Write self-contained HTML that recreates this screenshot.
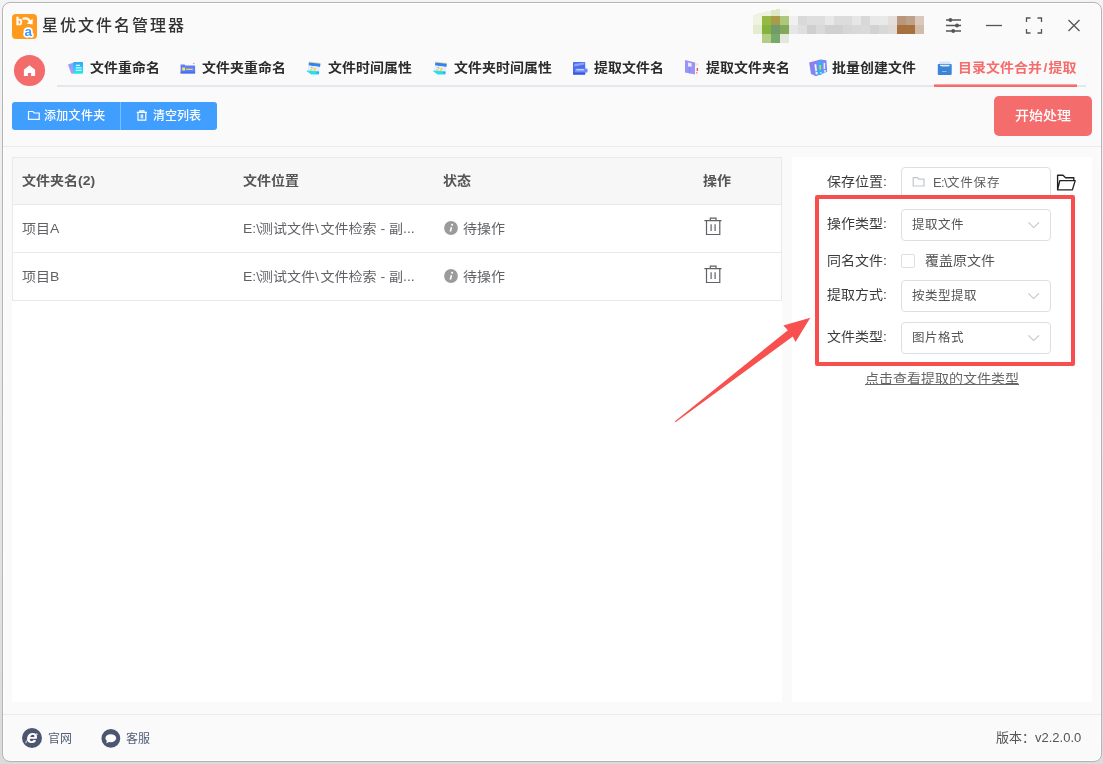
<!DOCTYPE html>
<html lang="zh-CN">
<head>
<meta charset="utf-8">
<title>星优文件名管理器</title>
<style>
*{box-sizing:border-box;margin:0;padding:0}
html,body{width:1103px;height:764px;overflow:hidden;background:#e6e6e6}
body{background:linear-gradient(#f3f3f3,#dbdbdb)}
body{font-family:"Liberation Sans","Noto Sans CJK SC",sans-serif;color:#333;position:relative}
#root{position:absolute;left:0;top:0;width:1103px;height:764px;will-change:transform}
.abs{position:absolute}
.win{position:absolute;left:2px;top:2px;width:1100px;height:760px;border:1px solid #b4b4b4;border-radius:8px;background:#fafafa;box-shadow:inset 0 0 0 1px #fff}
.t{position:absolute;white-space:nowrap;line-height:20px;height:20px}
.title{left:42px;top:16px;font-size:16px;letter-spacing:2px;color:#333;font-weight:500}
.tab{font-size:13px;letter-spacing:.1px;transform:scaleX(1.07);transform-origin:0 0;font-weight:700;color:#2b2b2b;top:58px}
.tab.on{color:#f56c6c}
.tabline{left:57px;top:85px;width:1029px;height:2px;background:#e4e7ed}
.tabon{left:934px;top:84px;width:143px;height:3px;background:#f56c6c}
.btn{position:absolute;color:#fff;font-size:12px;white-space:nowrap}
.hline{position:absolute;height:1px;background:#ebebeb}
.panel{position:absolute;background:#fff}
.th{font-size:13px;transform:scaleX(1.077);transform-origin:0 0;font-weight:700;color:#555;top:171px}
.td{font-size:13px;transform:scaleX(1.077);transform-origin:0 0;color:#606266}
.lab{font-size:13px;transform:scaleX(1.077);transform-origin:0 0;color:#3a3a3a}
.inp{position:absolute;left:901px;width:150px;border:1px solid #dcdfe6;border-radius:4px;background:#fff}
.sel{font-size:12.5px;letter-spacing:.5px;color:#555}
.ib{display:inline-block;letter-spacing:0;white-space:pre}
.foot{font-size:12px;color:#555e78}
</style>
</head>
<body>
<div id="root">
<div class="win"></div>

<!-- title bar -->
<svg class="abs" style="left:12px;top:14px" width="25" height="25" viewBox="0 0 25 25">
  <rect width="25" height="25" rx="4" fill="#ff9a1c"/>
  <text x="4" y="11.4" font-family="Liberation Sans, sans-serif" font-weight="700" font-size="10.5" fill="#fff" stroke="#fff" stroke-width="0.4">b</text>
  <path d="M10.6 4.9 C14 3.9 17 5.2 18.3 8.2" fill="none" stroke="#fff" stroke-width="2.2"/>
  <path d="M14.6 9.6 L20.6 10.6 L20.7 4.8 Z" fill="#fff"/>
  <text x="12.4" y="22.1" font-family="Liberation Sans, sans-serif" font-weight="700" font-size="13.5" fill="#fff" stroke="#fff" stroke-width="3.4" stroke-linejoin="round">a</text>
  <text x="12.4" y="22.1" font-family="Liberation Sans, sans-serif" font-weight="700" font-size="13.5" fill="#3d9bff">a</text>
</svg>
<div class="t title">星优文件名管理器</div>

<!-- mosaic placeholder -->
<svg class="abs" id="mosaic" style="left:753px;top:7px" width="171" height="36" viewBox="0 0 171 36" shape-rendering="crispEdges">
<path d="M0 9 V8 Q9 5 18 3.5 V9 Z" fill="#eef3e0"/>
<path d="M18 9 V3.5 L27 1.5 V9 Z" fill="#dfe8c4"/>
<rect x="27" y="1.5" width="9" height="7.5" fill="#f5f7f0"/>
<rect x="0" y="9" width="9" height="9" fill="#eef3e2"/>
<rect x="9" y="9" width="9" height="9" fill="#95b943"/>
<rect x="18" y="9" width="9" height="9" fill="#a89b4a"/>
<rect x="27" y="9" width="9" height="9" fill="#adc878"/>
<rect x="36" y="9" width="9" height="9" fill="#f0f0f0"/>
<rect x="45" y="9" width="9" height="9" fill="#d9d9d9"/>
<rect x="54" y="9" width="9" height="9" fill="#dedede"/>
<rect x="63" y="9" width="9" height="9" fill="#dedede"/>
<rect x="72" y="9" width="9" height="9" fill="#e8e8e8"/>
<rect x="81" y="9" width="9" height="9" fill="#dcdcdc"/>
<rect x="90" y="9" width="9" height="9" fill="#dcdcdc"/>
<rect x="99" y="9" width="9" height="9" fill="#e6e6e6"/>
<rect x="108" y="9" width="9" height="9" fill="#d8d8d8"/>
<rect x="117" y="9" width="9" height="9" fill="#e8e8e8"/>
<rect x="126" y="9" width="9" height="9" fill="#e9e9e9"/>
<rect x="135" y="9" width="9" height="9" fill="#e4dfdc"/>
<rect x="144" y="9" width="9" height="9" fill="#b9977c"/>
<rect x="153" y="9" width="9" height="9" fill="#bfa088"/>
<rect x="162" y="9" width="9" height="9" fill="#d9c8bb"/>
<rect x="0" y="18" width="9" height="9" fill="#e4ecd0"/>
<rect x="9" y="18" width="9" height="9" fill="#84b33c"/>
<rect x="18" y="18" width="9" height="9" fill="#6f9c6a"/>
<rect x="27" y="18" width="9" height="9" fill="#84a85a"/>
<rect x="36" y="18" width="9" height="9" fill="#e6e6e6"/>
<rect x="45" y="18" width="9" height="9" fill="#dfdfdf"/>
<rect x="54" y="18" width="9" height="9" fill="#cfcfcf"/>
<rect x="63" y="18" width="9" height="9" fill="#d9d9d9"/>
<rect x="72" y="18" width="9" height="9" fill="#d0d0d0"/>
<rect x="81" y="18" width="9" height="9" fill="#d0d0d0"/>
<rect x="90" y="18" width="9" height="9" fill="#d6d6d6"/>
<rect x="99" y="18" width="9" height="9" fill="#d8d8d8"/>
<rect x="108" y="18" width="9" height="9" fill="#dadada"/>
<rect x="117" y="18" width="9" height="9" fill="#d2d2d2"/>
<rect x="126" y="18" width="9" height="9" fill="#d8d8d8"/>
<rect x="135" y="18" width="9" height="9" fill="#e0dad6"/>
<rect x="144" y="18" width="9" height="9" fill="#a8703f"/>
<rect x="153" y="18" width="9" height="9" fill="#a8723f"/>
<rect x="162" y="18" width="9" height="9" fill="#d2bba8"/>
<rect x="9" y="27" width="9" height="9" fill="#b3cd85"/>
<rect x="18" y="27" width="9" height="9" fill="#78a86a"/>
<rect x="27" y="27" width="9" height="9" fill="#e4e8dc"/>
</svg>

<!-- window controls -->
<svg class="abs" style="left:940px;top:12px" width="150" height="28" viewBox="940 12 150 28" fill="none" stroke="#555" stroke-width="1.3">
  <path d="M946 20H961M946 25.5H961M946 31H961"/>
  <circle cx="950.4" cy="20" r="1.9" fill="#555" stroke="none"/>
  <circle cx="957" cy="25.5" r="1.9" fill="#555" stroke="none"/>
  <circle cx="953.2" cy="31" r="1.9" fill="#555" stroke="none"/>
  <path d="M986 25.5H1002"/>
  <path d="M1026.5 22V18H1030.5M1037.5 18H1041.5V22M1041.5 29V33H1037.5M1030.5 33H1026.5V29"/>
  <path d="M1068.5 20L1079.5 31M1079.5 20L1068.5 31"/>
</svg>

<!-- home + tabs -->
<svg class="abs" style="left:12px;top:53px" width="36" height="36" viewBox="12 53 36 36"><circle cx="29.5" cy="70.55" r="15.55" fill="#f46b6c"/><path d="M29.5 65.2 L35.1 69.8 V76 H31.1 V72.9 H27.9 V76 H23.9 V69.8 Z" fill="#fff"/></svg>

<div class="abs tabline"></div>
<svg class="abs" style="left:934px;top:84px" width="143" height="3"><rect y="0.4" width="143" height="2.6" fill="#f56c6c"/></svg>

<div class="t tab" style="left:90px">文件重命名</div>
<div class="t tab" style="left:202px">文件夹重命名</div>
<div class="t tab" style="left:328px">文件时间属性</div>
<div class="t tab" style="left:454px">文件夹时间属性</div>
<div class="t tab" style="left:594px">提取文件名</div>
<div class="t tab" style="left:706px">提取文件夹名</div>
<div class="t tab" style="left:832px">批量创建文件</div>
<div class="t tab on" style="left:957.5px">目录文件合并<span class="ib" style="width:6px;text-align:center;line-height:1">/</span>提取</div>


<!-- toolbar -->
<div class="btn" style="left:12px;top:102px;width:205px;height:28px;background:#409eff;border-radius:3px"></div>
<div class="abs" style="left:120px;top:102px;width:1px;height:28px;background:#7fbcff"></div>
<div class="t" style="left:44px;top:106px;font-size:12px;letter-spacing:.3px;font-weight:500;color:#fff">添加文件夹</div>
<div class="t" style="left:153px;top:106px;font-size:12px;font-weight:500;color:#fff">清空列表</div>
<div class="btn" style="left:994px;top:96px;width:98px;height:40px;background:#f56c6c;border-radius:5px"></div>
<div class="t" style="left:1015px;top:106px;font-size:13px;transform:scaleX(1.077);transform-origin:0 0;font-weight:500;color:#fff">开始处理</div>

<div class="hline" style="left:3px;top:146px;width:1098px"></div>

<!-- panels -->
<div class="panel" style="left:12px;top:157px;width:770px;height:545px"></div>
<div class="panel" style="left:792px;top:157px;width:300px;height:545px"></div>

<!-- table -->
<div class="abs" style="left:12px;top:157px;width:770px;height:144px;border:1px solid #e9e9e9"></div>
<div class="abs" style="left:13px;top:158px;width:768px;height:46px;background:#f7f7f7"></div>
<div class="hline" style="left:13px;top:204px;width:768px;background:#e9e9e9"></div>
<div class="hline" style="left:13px;top:252px;width:768px;background:#e9e9e9"></div>
<div class="t th" style="left:22px">文件夹名(2)</div>
<div class="t th" style="left:243px">文件位置</div>
<div class="t th" style="left:443px">状态</div>
<div class="t th" style="left:703px">操作</div>

<div class="t td" style="left:22px;top:219px">项目A</div>
<div class="t td" style="left:243px;top:219px"><span class="ib" style="width:14.9px">E:\</span>测试文件<span class="ib" style="width:5.1px">\</span>文件检索<span class="ib" style="width:11.6px;text-align:center">-</span>副<span class="ib" style="width:10.2px">...</span></div>
<div class="t td" style="left:463px;top:219px">待操作</div>
<div class="t td" style="left:22px;top:267px">项目B</div>
<div class="t td" style="left:243px;top:267px"><span class="ib" style="width:14.9px">E:\</span>测试文件<span class="ib" style="width:5.1px">\</span>文件检索<span class="ib" style="width:11.6px;text-align:center">-</span>副<span class="ib" style="width:10.2px">...</span></div>
<div class="t td" style="left:463px;top:267px">待操作</div>

<!-- right panel -->
<div class="t lab" style="left:827px;top:172px">保存位置:</div>
<div class="t lab" style="left:827px;top:214px">操作类型:</div>
<div class="t lab" style="left:827px;top:251px">同名文件:</div>
<div class="t lab" style="left:827px;top:285px">提取方式:</div>
<div class="t lab" style="left:827px;top:327px">文件类型:</div>

<div class="inp" style="top:167px;height:31px"></div>
<div class="inp" style="top:209px;height:32px"></div>
<div class="inp" style="top:280px;height:32px"></div>
<div class="inp" style="top:322px;height:32px"></div>
<div class="t sel" style="left:933px;top:173px;color:#5e5e5e"><span class="ib" style="width:14px;font-size:13px;letter-spacing:-.7px">E:\</span><span style="letter-spacing:.8px">文件保存</span></div>
<div class="t sel" style="left:912px;top:215px">提取文件</div>
<div class="t sel" style="left:912px;top:286px">按类型提取</div>
<div class="t sel" style="left:912px;top:328px">图片格式</div>

<div class="abs" style="left:901px;top:254px;width:14px;height:14px;border:1px solid #dcdfe6;border-radius:2px;background:#fff"></div>
<div class="t lab" style="left:925px;top:251px;color:#555">覆盖原文件</div>

<div class="t" style="left:865px;top:369px;font-size:13px;transform:scaleX(1.077);transform-origin:0 0;color:#666;text-decoration:underline">点击查看提取的文件类型</div>

<!-- red annotation -->
<div class="abs" style="left:815px;top:195px;width:260px;height:171px;border:4px solid #f94e4e;border-radius:2px"></div>

<!-- footer -->
<div class="hline" style="left:3px;top:714px;width:1098px"></div>
<div class="t foot" style="left:48px;top:729px">官网</div>
<div class="t foot" style="left:126px;top:729px">客服</div>
<div class="t" style="left:996px;top:728px;font-size:13px;color:#555">版本：v2.2.0.0</div>
<!-- tab icons: one svg overlay in page coords -->
<svg class="abs" style="left:60px;top:56px" width="900" height="24" viewBox="60 56 900 24">
  <defs>
    <linearGradient id="g1" x1="0" y1="0" x2="0" y2="1"><stop offset="0" stop-color="#2fa8f5"/><stop offset="1" stop-color="#1cecf0"/></linearGradient>
    <linearGradient id="g1b" x1="0" y1="0" x2="0" y2="1"><stop offset="0" stop-color="#7fa4f8"/><stop offset="1" stop-color="#d48df2"/></linearGradient>
    <linearGradient id="g7" x1="0" y1="0" x2="1" y2="1"><stop offset="0" stop-color="#9178f2"/><stop offset="1" stop-color="#6698f6"/></linearGradient>
    <g id="cal">
      <path d="M2.3 0.6 L13.6 2 L13.3 3 L2.1 1.8 Z" fill="#f6d48c"/>
      <path d="M2 1.4 L13.7 2.8 L13.2 6 L1.8 4.6 Z" fill="#2f86ee"/>
      <path d="M1.6 4.6 L13.2 6 L12.4 11 L0.6 9.6 Z" fill="#eceafb"/>
      <path d="M4.2 6.6 q1.6 -0.4 2 0.8" fill="none" stroke="#58b0f5" stroke-width="0.9"/>
      <rect x="3" y="8.2" width="2.6" height="1.6" fill="#f3dc28"/>
      <path d="M6.8 10.2 L7.6 6.8 L9.2 7 L8.6 10.4 Z" fill="#f3dc28"/>
      <path d="M0 9.4 L12.4 10.6 L12.2 13.6 L4.4 13.4 L0.2 10.6 Z" fill="#25dff5"/>
      <rect x="9.6" y="10.6" width="2.6" height="2" fill="#3aa8f5"/>
    </g>
  </defs>
  <!-- 1 file rename -->
  <path d="M68 64.6 L74 62.6 V74 L71.2 73.6 Z" fill="url(#g1b)"/>
  <rect x="73.2" y="62" width="9.8" height="11.8" rx="1" fill="url(#g1)"/>
  <path d="M76 65.4H80M75.6 67.9H81.6M75.6 70.4H81.6" stroke="#d8f6ff" stroke-width="1.1"/>
  <!-- 2 folder rename -->
  <path d="M180.6 64.4 H184.6 L185.4 65.4 H195.1 V73.4 H180.6 Z" fill="#5d7ff7"/>
  <rect x="180.6" y="71.6" width="14.5" height="1.8" fill="#486cf2"/>
  <rect x="182.2" y="67.5" width="2.9" height="3.1" rx="0.5" fill="#ffe84a"/>
  <rect x="186" y="68.7" width="6.8" height="1.2" fill="#f5dd4a"/>
  <circle cx="193.8" cy="63.4" r="0.7" fill="#f57a9a"/>
  <!-- 3,4 calendars -->
  <use href="#cal" x="306.8" y="61"/>
  <use href="#cal" x="433.2" y="61"/>
  <!-- 5 extract filename -->
  <rect x="573" y="62" width="12.2" height="12.6" rx="0.8" fill="#4a6cf0"/>
  <path d="M574.4 64 L584.4 62.6 V64.4 L574.4 66.6 Z" fill="#8fa6f8"/>
  <rect x="575" y="68.6" width="12.6" height="4" rx="1.2" fill="#678ef9"/>
  <rect x="576.4" y="69.3" width="7.6" height="1" fill="#e6ecff"/>
  <rect x="573" y="72.6" width="12.2" height="2" fill="#3f55d8"/>
  <!-- 6 extract folder name -->
  <path d="M685 60 L695.2 62.4 V74.6 L685 72.6 Z" fill="#9a94f7"/>
  <path d="M688 62.6 L691.6 63.2 V66.8 L688 66.4 Z" fill="#e6ecfc"/>
  <path d="M689.6 67 V73.4" stroke="#8580ee" stroke-width="0.8"/>
  <path d="M695.2 66 L699 65.2 V73.2 L695.2 74.4 Z" fill="#fff"/>
  <rect x="696" y="63.4" width="2.6" height="2" fill="#f9e9a8"/>
  <rect x="696.6" y="68" width="1.5" height="3" fill="#f24b60"/>
  <rect x="696" y="72.2" width="1.4" height="1.2" fill="#f4665c"/>
  <!-- 7 batch create -->
  <path d="M809.2 62.4 L820.4 59.6 L826.4 60.2 L827.2 71.8 L816 76.2 L811 74 Z" fill="url(#g7)"/>
  <rect x="817.8" y="61" width="4.4" height="14" rx="2" fill="#2fb2f2"/>
  <rect x="819.4" y="65" width="1.6" height="4.6" fill="#f5c73a"/>
  <path d="M814.4 64.4 L816.2 64 L817 71 L815.4 71.4 Z" fill="#f4f4ff"/>
  <rect x="823.6" y="63" width="1.5" height="6" fill="#eeeaff"/>
  <rect x="815.6" y="72" width="2" height="2.4" fill="#e9f6ff"/>
  <rect x="820" y="72" width="1.6" height="1.6" fill="#bfe6fb"/>
  <rect x="824" y="70" width="2" height="2.4" fill="#bfe0fb"/>
  <!-- 8 merge -->
  <rect x="939.4" y="61.6" width="10.8" height="5" fill="#d5e3f5"/>
  <rect x="937.8" y="64" width="13.9" height="10.9" rx="0.8" fill="#3b84d8"/>
  <path d="M940 64.8 H949.6 V66.2 Q945 67 940 66 Z" fill="#dfeafa"/>
  <rect x="942" y="71" width="4.6" height="0.9" fill="#9fc0e8"/>
</svg>

<!-- toolbar icons -->
<svg class="abs" style="left:26px;top:108px" width="124" height="15" viewBox="26 108 124 15" fill="none" stroke="#fff" stroke-width="1.2">
  <path d="M28.5 111.5 H33 L34.2 113 H39.2 V119.3 H28.5 Z"/>
  <path d="M136.8 112.4 H147M139.8 112.2 V110.8 H144 V112.2M138 112.6 V120.2 H145.8 V112.6"/>
  <rect x="140.6" y="114.4" width="2.6" height="4" fill="#d5e9ff" stroke="none"/>
</svg>

<!-- table icons -->
<svg class="abs" style="left:440px;top:215px" width="290" height="72" viewBox="440 215 290 72">
  <g id="inf"><circle cx="451" cy="228" r="6.9" fill="#9b9b9b"/>
  <circle cx="452.1" cy="224.7" r="1" fill="#fff"/><path d="M451.5 227.1 L450.3 231.5" stroke="#fff" stroke-width="1.6" stroke-linecap="butt" fill="none"/></g>
  <use href="#inf" y="48"/>
  <g id="tr" fill="none" stroke="#606266" stroke-width="1.2">
    <path d="M704.4 220.7 H721.5M710.3 220.5 V218.2 H716 V220.5M706.5 221 V234.5 H719.8 V221M711.1 224.3 V231.1M715.1 224.3 V231.1"/>
  </g>
  <use href="#tr" y="48"/>
</svg>

<!-- right panel icons -->
<svg class="abs" style="left:905px;top:170px" width="175" height="180" viewBox="905 170 175 180" fill="none">
  <path d="M913.2 177.6 H917.6 L918.8 179.2 H924 V186 H913.2 Z" stroke="#c3c7cf" stroke-width="1.2"/>
  <path d="M1057.6 189.8 V175.2 H1063 L1065.6 177.7 H1073.8 V180.4 M1059.8 180.6 H1075.2 L1072.4 189.9 H1057.6 Z" stroke="#222" stroke-width="1.35" stroke-linejoin="round"/>
  <g stroke="#c0c4cc" stroke-width="1.1">
    <path d="M1028.4 222.4 L1033.7 227.6 L1039 222.4"/>
    <path d="M1028.4 293.4 L1033.7 298.6 L1039 293.4"/>
    <path d="M1028.4 335.4 L1033.7 340.6 L1039 335.4"/>
  </g>
</svg>

<!-- arrow -->
<svg class="abs" style="left:670px;top:312px" width="146" height="114" viewBox="670 312 146 114">
  <path d="M674.7 421.4 L787.9 330.2 L783.4 325.5 L810.3 317.7 L795.5 342 L792.8 336.5 L675.5 422.2 Z" fill="#f8504f"/>
</svg>

<!-- footer icons -->
<svg class="abs" style="left:20px;top:726px" width="104" height="24" viewBox="20 726 104 24">
  <circle cx="32" cy="738" r="10" fill="#4d5670"/>
  <text transform="translate(26.4 743.3) scale(1.13 1)" font-family="Liberation Sans, sans-serif" font-weight="700" font-style="italic" font-size="17.5" fill="#fff">e</text>
  <path d="M26 743.2 Q25.4 741.6 28 739.4 M35.6 734.4 Q37.6 733 37.6 734.6" stroke="#fff" stroke-width="0.9" fill="none"/>
  <circle cx="110.85" cy="738.45" r="9.4" fill="#4d5670"/>
  <ellipse cx="110.8" cy="738.2" rx="5.3" ry="4" fill="#fff"/>
  <path d="M107 740.4 L106.2 743.2 L109.6 741.8 Z" fill="#fff"/>
</svg>

</div>
</body>
</html>
